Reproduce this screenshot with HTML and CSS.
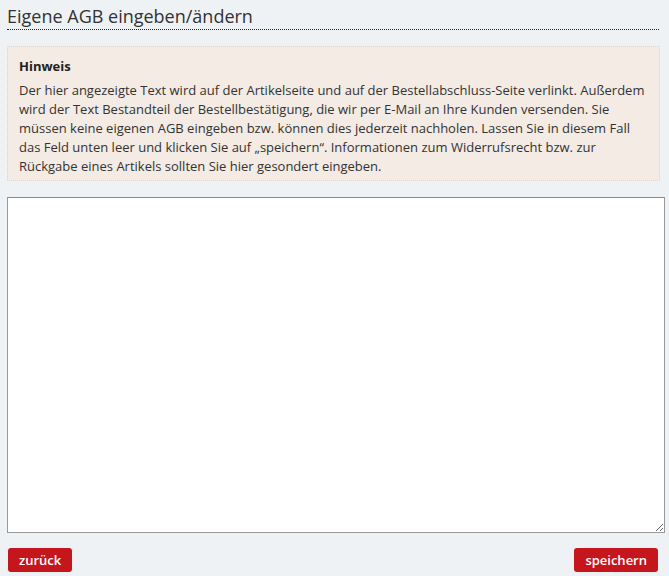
FILE: index.html
```html
<!DOCTYPE html>
<html lang="de">
<head>
    <meta charset="UTF-8">
    <meta name="viewport" content="width=device-width, initial-scale=1.0">
    <title>Eigene AGB eingeben/ändern</title>
    <link rel="stylesheet" href="styles.css">
</head>
<body>
    <div class="page">
        <h1 class="page-title">Eigene AGB eingeben/ändern</h1>

        <div class="hint">
            <h2>Hinweis</h2>
            <p>Der hier angezeigte Text wird auf der Artikelseite und auf der Bestellabschluss-Seite verlinkt. Außerdem wird der Text Bestandteil der Bestellbestätigung, die wir per E-Mail an Ihre Kunden versenden. Sie müssen keine eigenen AGB eingeben bzw. können dies jederzeit nachholen. Lassen Sie in diesem Fall das Feld unten leer und klicken Sie auf „speichern“. Informationen zum Widerrufsrecht bzw. zur Rückgabe eines Artikels sollten Sie hier gesondert eingeben.</p>
        </div>

        <form class="agb-form">
            <textarea class="agb-text" name="agb"></textarea>
            <div class="actions">
                <button type="button" class="btn">zurück</button>
                <button type="submit" class="btn">speichern</button>
            </div>
        </form>
    </div>
</body>
</html>
```

FILE: styles.css
```css
* {
    margin: 0;
    padding: 0;
    box-sizing: border-box;
    font-family: "Open Sans", Arial, sans-serif;
}

body {
    background-color: #eef2f5;
    color: #333;
}

.page {
    padding: 4px 4px 0 7px;
    width: 669px;
}

.page-title {
    font-size: 18px;
    font-weight: normal;
    color: #333;
    line-height: 24px;
    padding-bottom: 1px;
    border-bottom: 1px dotted #222;
    width: 652px;
}

.hint {
    margin-top: 16px;
    width: 653px;
    background-color: #f3ebe4;
    border: 1px dotted #ddd5cf;
    padding: 10px 11px 4px 11px;
    font-size: 13px;
    line-height: 19px;
}

.hint h2 {
    font-size: 13px;
    font-weight: bold;
    color: #222;
    line-height: 19px;
    margin-bottom: 5px;
}

.hint p {
    color: #333;
}

.agb-form {
    margin-top: 16px;
}

.agb-text {
    display: block;
    width: 658px;
    height: 336px;
    border: 1px solid #999;
    border-top-color: #888;
    background: #fff;
    resize: vertical;
}

.actions {
    display: flex;
    justify-content: space-between;
    margin-top: 15px;
    width: 651px;
    padding-left: 1px;
}

.btn {
    background-color: #c4161c;
    color: #fff;
    border: none;
    border-radius: 3px;
    font-size: 13px;
    font-weight: 600;
    height: 24px;
    padding: 0 11px;
    cursor: pointer;
}

.btn:hover {
    background-color: #a31116;
}
```
